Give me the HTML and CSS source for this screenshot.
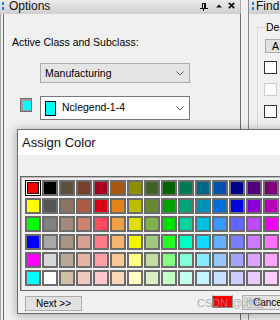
FILE: index.html
```html
<!DOCTYPE html>
<html>
<head>
<meta charset="utf-8">
<link rel="stylesheet" href="styles.css">
</head>
<body>
<div class="workspace">
  <section class="options">
    <header class="titlebar">
      <span class="grip"><i></i><i></i></span>
      <span class="title">Options</span>
      <span class="tools">
        <svg class="ico-pin" width="8" height="8" viewBox="0 0 8 8"><path fill-rule="evenodd" d="M2 0h4v5H2z M3 1h1v4H3z M0 5h8v1H0z M3 6h1v2H3z" fill="#111"/></svg>
        <svg class="ico-up" width="6" height="4" viewBox="0 0 6 4"><path d="M0 3.5 L3 0.5 L6 3.5z" fill="#111"/></svg>
        <svg class="ico-x" width="7" height="7" viewBox="0 0 7 7"><path d="M0.8 0.8 L6.2 6.2 M6.2 0.8 L0.8 6.2" stroke="#111" stroke-width="1.7"/></svg>
      </span>
    </header>
    <div class="options-body">
      <div class="options-inner">
        <div class="label">Active Class and Subclass:</div>
        <div class="combo combo-disabled">
          <span class="combo-text">Manufacturing</span>
          <svg class="chev" width="8" height="5" viewBox="0 0 8 5"><polyline points="0.5,0.5 4,4 7.5,0.5" fill="none" stroke="#606060" stroke-width="1"/></svg>
        </div>
        <div class="combo-row">
          <span class="color-btn"><i></i></span>
          <div class="combo combo-white">
            <span class="chip"></span>
            <span class="combo-text">Nclegend-1-4</span>
            <svg class="chev" width="8" height="5" viewBox="0 0 8 5"><polyline points="0.5,0.5 4,4 7.5,0.5" fill="none" stroke="#606060" stroke-width="1"/></svg>
          </div>
        </div>
      </div>
    </div>
  </section>
  <div class="splitter"></div>
  <section class="find">
    <header class="titlebar find-title">
      <span class="grip"><i></i><i></i></span>
      <span class="title">Find</span>
    </header>
    <div class="find-body">
      <fieldset class="group">
        <legend>Design Object Find Filter</legend>
        <button class="btn-all">All On</button>
        <label class="chk"><span class="box"></span>Groups</label>
        <label class="chk chk-off"><span class="box"></span>Comps</label>
        <label class="chk"><span class="box"></span>Symbols</label>
      </fieldset>
    </div>
  </section>
</div>

<div class="dialog">
  <div class="dlg-title">Assign Color</div>
  <div class="dlg-band"></div>
  <div class="palette">
    <div class="grid">
      <span class="sw sel" style="background:#ff0000"></span>
      <span class="sw" style="background:#000000"></span>
      <span class="sw" style="background:#5e4e3e"></span>
      <span class="sw" style="background:#7a3e2c"></span>
      <span class="sw" style="background:#a8001c"></span>
      <span class="sw" style="background:#a8580e"></span>
      <span class="sw" style="background:#8c9000"></span>
      <span class="sw" style="background:#3e6426"></span>
      <span class="sw" style="background:#006400"></span>
      <span class="sw" style="background:#007a56"></span>
      <span class="sw" style="background:#00688a"></span>
      <span class="sw" style="background:#0052b0"></span>
      <span class="sw" style="background:#00008c"></span>
      <span class="sw" style="background:#52007e"></span>
      <span class="sw" style="background:#80007c"></span>

      <span class="sw" style="background:#ffff00"></span>
      <span class="sw" style="background:#555555"></span>
      <span class="sw" style="background:#8c7462"></span>
      <span class="sw" style="background:#ac5c44"></span>
      <span class="sw" style="background:#d80018"></span>
      <span class="sw" style="background:#e6821a"></span>
      <span class="sw" style="background:#bcbc00"></span>
      <span class="sw" style="background:#688a34"></span>
      <span class="sw" style="background:#00a000"></span>
      <span class="sw" style="background:#00a478"></span>
      <span class="sw" style="background:#0092b4"></span>
      <span class="sw" style="background:#006ed8"></span>
      <span class="sw" style="background:#0000e0"></span>
      <span class="sw" style="background:#8c00d8"></span>
      <span class="sw" style="background:#b800b8"></span>

      <span class="sw" style="background:#00ff00"></span>
      <span class="sw" style="background:#808080"></span>
      <span class="sw" style="background:#a28a78"></span>
      <span class="sw" style="background:#cc8470"></span>
      <span class="sw" style="background:#ff4c5c"></span>
      <span class="sw" style="background:#f0a046"></span>
      <span class="sw" style="background:#e0e000"></span>
      <span class="sw" style="background:#80b04e"></span>
      <span class="sw" style="background:#00e000"></span>
      <span class="sw" style="background:#00d4a0"></span>
      <span class="sw" style="background:#00c0e6"></span>
      <span class="sw" style="background:#3896ff"></span>
      <span class="sw" style="background:#6464ff"></span>
      <span class="sw" style="background:#bc48ff"></span>
      <span class="sw" style="background:#f000f0"></span>

      <span class="sw" style="background:#0000ff"></span>
      <span class="sw" style="background:#a8a8a8"></span>
      <span class="sw" style="background:#a89484"></span>
      <span class="sw" style="background:#d8a090"></span>
      <span class="sw" style="background:#ff7c88"></span>
      <span class="sw" style="background:#f4b472"></span>
      <span class="sw" style="background:#f4f400"></span>
      <span class="sw" style="background:#a0c880"></span>
      <span class="sw" style="background:#20ff20"></span>
      <span class="sw" style="background:#00ffc0"></span>
      <span class="sw" style="background:#10d8ff"></span>
      <span class="sw" style="background:#64b0ff"></span>
      <span class="sw" style="background:#7c7cff"></span>
      <span class="sw" style="background:#cc78ff"></span>
      <span class="sw" style="background:#ff70ff"></span>

      <span class="sw" style="background:#ff00ff"></span>
      <span class="sw" style="background:#d8d8d8"></span>
      <span class="sw" style="background:#b8a898"></span>
      <span class="sw" style="background:#e6b4a4"></span>
      <span class="sw" style="background:#ffa0a8"></span>
      <span class="sw" style="background:#f8c892"></span>
      <span class="sw" style="background:#ffff88"></span>
      <span class="sw" style="background:#c4dca4"></span>
      <span class="sw" style="background:#84ff84"></span>
      <span class="sw" style="background:#80ffd8"></span>
      <span class="sw" style="background:#84eaff"></span>
      <span class="sw" style="background:#94c8ff"></span>
      <span class="sw" style="background:#a4a4ff"></span>
      <span class="sw" style="background:#dca4ff"></span>
      <span class="sw" style="background:#ffa4ff"></span>

      <span class="sw" style="background:#00ffff"></span>
      <span class="sw" style="background:#ffffff"></span>
      <span class="sw" style="background:#d0c0a8"></span>
      <span class="sw" style="background:#eecac0"></span>
      <span class="sw" style="background:#ffc8d0"></span>
      <span class="sw" style="background:#f8d8b8"></span>
      <span class="sw" style="background:#ffffc4"></span>
      <span class="sw" style="background:#dcecc4"></span>
      <span class="sw" style="background:#c4ffc4"></span>
      <span class="sw" style="background:#c4fff0"></span>
      <span class="sw" style="background:#c4f4ff"></span>
      <span class="sw" style="background:#c8e0ff"></span>
      <span class="sw" style="background:#ccccff"></span>
      <span class="sw" style="background:#e8ccff"></span>
      <span class="sw" style="background:#ffccff"></span>
    </div>
  </div>
  <div class="dlg-foot">
    <button class="btn btn-next">Next &gt;&gt;</button>
    <span class="preview"></span>
    <button class="btn btn-cancel">Cancel</button>
  </div>
  <div class="watermark">CSDN @池鱼</div>
</div>
</body>
</html>
```

FILE: styles.css
```css
* { box-sizing: border-box; }
html, body { margin: 0; padding: 0; }
body {
  width: 280px;
  height: 320px;
  overflow: hidden;
  position: relative;
  background: #f0f0f0;
  font-family: "Liberation Sans", Arial, sans-serif;
  font-size: 10.5px;
  color: #000;
}

.workspace { display: flex; height: 320px; }

/* ---------- title bars ---------- */
.titlebar {
  height: 14px;
  flex: none;
  display: flex;
  align-items: flex-start;
  background: linear-gradient(#ececec, #cfcfcf);
  font-size: 12px;
  line-height: 12px;
  white-space: nowrap;
  overflow: hidden;
}
.grip {
  display: flex;
  flex-direction: column;
  gap: 2px;
  margin: 2px 0 0 2px;
}
.grip i { display: block; width: 2px; height: 3px; background: #1f7fe6; }
.title { margin-left: 5px; color: #111; }
.tools {
  margin-left: auto;
  display: flex;
  align-items: flex-start;
  padding-right: 5px;
}
.tools svg { display: block; }
.ico-pin { margin-top: 3px; }
.ico-up { margin: 4px 0 0 8px; }
.ico-x { margin: 2px 0 0 6px; }

/* ---------- options panel ---------- */
.options {
  width: 241px;
  flex: none;
  display: flex;
  flex-direction: column;
}
.options .titlebar { border-right: 1px solid #a8a8a8; }
.options-body {
  flex: 1;
  display: flex;
  border-left: 1px solid #a6a6a6;
  padding-left: 2px;
}
.options-inner {
  flex: 1;
  border-left: 1px solid #6e6e6e;
  border-right: 1px solid #6e6e6e;
  padding: 22px 0 0 8px;
}
.label { line-height: 12px; white-space: nowrap; }

.combo {
  width: 150px;
  display: flex;
  align-items: center;
  padding-left: 4px;
  white-space: nowrap;
}
.combo-disabled {
  margin: 15px 0 0 28px;
  height: 20px;
  background: #e5e5e5;
  border: 1px solid #adadad;
}
.combo-white {
  height: 24px;
  background: #fff;
  border: 1px solid #7a7a7a;
}
.combo-text { line-height: 12px; }
.combo-white .combo-text { margin-bottom: 3px; }
.chev { display: block; margin-left: auto; margin-right: 5px; }

.combo-row {
  display: flex;
  align-items: flex-start;
  margin-top: 13px;
}
.color-btn {
  width: 12px;
  height: 14px;
  margin: 2px 8px 0 8px;
  border: 1px solid #6f6f6f;
  background: #9c9c9c;
  padding: 2px 0 0 2px;
}
.color-btn i { display: block; width: 8px; height: 9px; background: #00ffff; }
.chip {
  width: 11px;
  height: 15px;
  border: 1px solid #000;
  background: #00ffff;
  margin-right: 6px;
  flex: none;
}

/* ---------- splitter & find panel ---------- */
.splitter { width: 7px; flex: none; }
.find {
  width: 200px;
  flex: none;
  display: flex;
  flex-direction: column;
  border-left: 1px solid #8a8a8a;
}
.find-title .grip { margin-left: 3px; }
.find-title .title { margin-left: 2px; }
.find-body { padding-left: 8px; }
.group {
  margin: 7px 0 0 0;
  padding: 0 0 20px 7px;
  border: 1px solid #d8d8d8;
  width: 180px;
  min-width: 0;
}
.group legend {
  padding: 0 1px;
  line-height: 12px;
  white-space: nowrap;
}
.btn-all {
  display: block;
  margin: 6px 0 0 0;
  height: 14px;
  width: 60px;
  padding: 0 0 0 6px;
  text-align: left;
  font: 10.5px/12px "Liberation Sans", Arial, sans-serif;
  letter-spacing: 1px;
  background: #e1e1e1;
  border: 1px solid #adadad;
}
.chk {
  display: flex;
  align-items: center;
  gap: 5px;
  margin: 8px 0 0 -1px;
  height: 13px;
  white-space: nowrap;
}
.chk + .chk { margin-top: 9px; }
.chk .box {
  width: 13px;
  height: 13px;
  flex: none;
  background: #fff;
  border: 1px solid #333;
}
.chk-off .box { border-color: #cccccc; }
.chk-off { color: #a0a0a0; }

/* ---------- dialog ---------- */
.dialog {
  position: absolute;
  left: 17px;
  top: 129px;
  width: 300px;
  height: 185px;
  background: #f0f0f0;
  border: 1px solid #6e6e6e;
  box-shadow: 0 1px 9px 1px rgba(0, 0, 0, 0.28);
}
.dlg-title {
  height: 25px;
  background: #fff;
  padding-left: 4px;
  font-size: 13px;
  line-height: 25px;
  color: #111;
}
.dlg-band { height: 21px; }
.palette {
  margin-left: 2px;
  border-top: 1px solid #686868;
  border-left: 1px solid #686868;
  border-bottom: 1px solid #686868;
  box-shadow: inset 1px 1px 0 #b8b8b8;
  padding: 3px 0 4px 4px;
}
.grid {
  display: grid;
  grid-template-columns: repeat(15, 16px);
  grid-auto-rows: 16px;
  column-gap: 1px;
  row-gap: 2px;
}
.sw {
  display: block;
  border: 2px solid #6c6c6c;
}
.sw.sel {
  border: 1px solid #000;
  box-shadow: inset 0 0 0 1px #fff, inset 0 0 0 2px #000;
}

.dlg-foot {
  height: 22px;
  display: flex;
  align-items: flex-start;
}
.btn {
  height: 15px;
  padding: 0;
  font: 10px/13px "Liberation Sans", Arial, sans-serif;
  color: #000;
  background: #e1e1e1;
  border: 1px solid #adadad;
}
.btn-next { width: 57px; margin: 5px 0 0 7px; }
.preview {
  width: 21px;
  height: 13px;
  margin: 4px 0 0 130px;
  background: #ff0000;
  border: 1px solid #8a8a8a;
  border-top-color: #d8d8d8;
}
.btn-cancel {
  width: 60px;
  margin: 4px 0 0 9px;
  text-align: left;
  padding-left: 10px;
}
.watermark {
  position: absolute;
  left: 179px;
  top: 167px;
  font-family: "Liberation Sans", "Noto Sans CJK SC", sans-serif;
  font-size: 11px;
  line-height: 13px;
  color: rgba(150, 150, 150, 0.75);
  white-space: nowrap;
}
```
